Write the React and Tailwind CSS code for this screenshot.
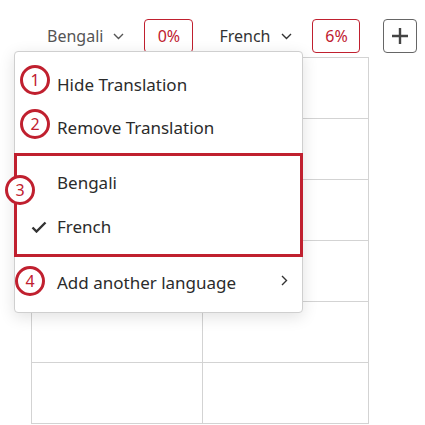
import React from "react";

const red = "border-[#c0202f] text-[#c0202f]";

const Badge = ({ n, className }) => (
  <div
    className={`absolute w-[30px] h-[30px] rounded-full border-[3px] bg-white flex items-center justify-center text-[16px] leading-none ${red} ${className}`}
  >
    {n}
  </div>
);

const ChevronDown = ({ className }) => (
  <svg className={className} width="11" height="7" viewBox="0 0 11 7" fill="none">
    <path d="M1 1l4.5 4.5L10 1" stroke="currentColor" strokeWidth="1.4" />
  </svg>
);

const App = () => {
  const rows = [0, 1, 2, 3, 4, 5];
  return (
    <div className="w-[425px] h-[425px] bg-white overflow-hidden relative font-['Noto_Sans',sans-serif]">
      {/* header */}
      <div className="flex items-center mt-[19px] pl-[47px] h-[34px]">
        <span className="text-[16px] text-[#555]">Bengali</span>
        <ChevronDown className="ml-[10px] text-[#555]" />
        <div className="ml-[20px] w-[49px] h-[34px] rounded-[4px] border-[1.5px] border-[#c0202f] text-[#c0202f] text-[16px] flex items-center justify-center">
          0%
        </div>
        <span className="ml-[26px] text-[16px] text-[#333]">French</span>
        <ChevronDown className="ml-[11px] text-[#333]" />
        <div className="ml-[20px] w-[48px] h-[34px] rounded-[4px] border-[1.5px] border-[#c0202f] text-[#c0202f] text-[16px] flex items-center justify-center">
          6%
        </div>
        <div className="ml-[23px] w-[34px] h-[34px] rounded-[4px] border-[1.5px] border-[#666] flex items-center justify-center">
          <svg width="18" height="18" viewBox="0 0 18 18">
            <path d="M9 1v16M1 9h16" stroke="#444" strokeWidth="2.4" />
          </svg>
        </div>
      </div>

      {/* grid */}
      <div className="ml-[31px] mt-[4px] w-[338px] border-t border-l border-[#d3d3d3]">
        {rows.map((r) => (
          <div key={r} className="grid grid-cols-[171px_166px] h-[61px] border-b border-[#d3d3d3]">
            <div className="border-r border-[#d3d3d3]" />
            <div className="border-r border-[#d3d3d3]" />
          </div>
        ))}
      </div>

      {/* dropdown menu */}
      <div className="absolute left-[14px] top-[51px] w-[289px] h-[262px] bg-white border border-[#cfcfcf] rounded-[4px] shadow-[0_4px_16px_rgba(0,0,0,0.12)] text-[17px] text-[#2b2b2b] pt-[11px]">
        <div className="h-[43px] flex items-center pl-[42px]">Hide Translation</div>
        <div className="h-[43px] flex items-center pl-[42px]">Remove Translation</div>
        <div className="mt-[4px] -mx-px h-[104px] border-[3px] border-[#c0202f] pt-[5px]">
          <div className="h-[44px] flex items-center pl-[40px]">Bengali</div>
          <div className="h-[44px] flex items-center pl-[14px]">
            <svg width="16" height="12" viewBox="0 0 16 12" className="mr-[10px]">
              <path d="M1.5 6.5l4 4L14.5 1.5" stroke="#333" strokeWidth="2.4" fill="none" />
            </svg>
            French
          </div>
        </div>
        <div className="mt-[4px] h-[44px] flex items-center pl-[42px] pr-[14px]">
          <span className="flex-1">Add another language</span>
          <svg width="7" height="11" viewBox="0 0 7 11" className="-mt-[6px]">
            <path d="M1 1l4.5 4.5L1 10" stroke="#333" strokeWidth="1.4" fill="none" />
          </svg>
        </div>
      </div>

      {/* annotation badges */}
      <Badge n="1" className="left-[20px] top-[65px]" />
      <Badge n="2" className="left-[20px] top-[109px]" />
      <Badge n="3" className="left-[5px] top-[175px]" />
      <Badge n="4" className="left-[15px] top-[266px]" />
    </div>
  );
};

export default App;
